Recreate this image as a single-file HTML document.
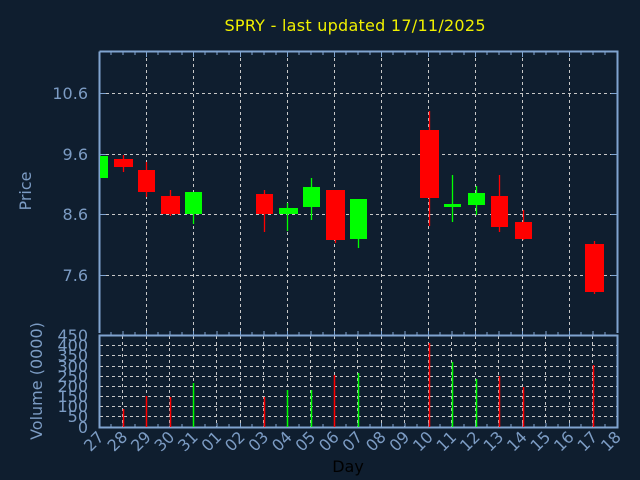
<!DOCTYPE html>
<html><head><meta charset="utf-8"><style>
html,body{margin:0;padding:0;background:#0f1e2f;}
svg{display:block;}
text{font-family:"DejaVu Sans","Liberation Sans",sans-serif;}
</style></head><body>
<svg width="640" height="480" viewBox="0 0 640 480" xmlns="http://www.w3.org/2000/svg">
<rect width="640" height="480" fill="#0f1e2f"/>
<text x="355" y="31" fill="#f0f000" font-size="16" text-anchor="middle" textLength="261">SPRY - last updated 17/11/2025</text>
<g stroke="#c8c8c8" stroke-width="1" stroke-dasharray="3,3" fill="none">
<path d="M146.5 52V333M193.5 52V333M240.5 52V333M287.5 52V333M334.5 52V333M381.5 52V333M428.5 52V333M475.5 52V333M522.5 52V333M569.5 52V333"/>
<path d="M100 93.5H617M100 154.5H617M100 214.5H617M100 275.5H617"/>
<path d="M122.5 336V427M146.5 336V427M169.5 336V427M193.5 336V427M216.5 336V427M240.5 336V427M263.5 336V427M287.5 336V427M310.5 336V427M334.5 336V427M357.5 336V427M381.5 336V427M404.5 336V427M428.5 336V427M451.5 336V427M475.5 336V427M498.5 336V427M522.5 336V427M545.5 336V427M569.5 336V427M592.5 336V427"/>
<path d="M100 345.5H617M100 355.5H617M100 366.5H617M100 376.5H617M100 386.5H617M100 396.5H617M100 406.5H617M100 416.5H617"/>
</g>
<g stroke="#80a4d0" stroke-width="2" fill="none">
<path d="M99.5 51.5H617.5V333M99.5 51.5V333"/>
<path d="M99.5 335.5H617.5V427.5H99.5Z"/>
</g>
<g stroke="#80a4d0" stroke-width="1" fill="none">
<path d="M111 52v3M123 52v3M135 52v3M146.5 52v5M158 52v3M170 52v3M182 52v3M193.5 52v5M205 52v3M217 52v3M229 52v3M240.5 52v5M252 52v3M264 52v3M276 52v3M287.5 52v5M299 52v3M311 52v3M323 52v3M334.5 52v5M346 52v3M358 52v3M370 52v3M381.5 52v5M393 52v3M405 52v3M417 52v3M428.5 52v5M440 52v3M452 52v3M464 52v3M475.5 52v5M487 52v3M499 52v3M511 52v3M522.5 52v5M534 52v3M546 52v3M558 52v3M569.5 52v5M581 52v3M593 52v3M605 52v3"/>
<path d="M111 335v-3M123 335v-4M135 335v-3M146.5 335v-4M158 335v-3M170 335v-4M182 335v-3M193.5 335v-4M205 335v-3M217 335v-4M229 335v-3M240.5 335v-4M252 335v-3M264 335v-4M276 335v-3M287.5 335v-4M299 335v-3M311 335v-4M323 335v-3M334.5 335v-4M346 335v-3M358 335v-4M370 335v-3M381.5 335v-4M393 335v-3M405 335v-4M417 335v-3M428.5 335v-4M440 335v-3M452 335v-4M464 335v-3M475.5 335v-4M487 335v-3M499 335v-4M511 335v-3M522.5 335v-4M534 335v-3M546 335v-4M558 335v-3M569.5 335v-4M581 335v-3M593 335v-4M605 335v-3"/>
<path d="M111 427v-3M123 427v-4M135 427v-3M146.5 427v-4M158 427v-3M170 427v-4M182 427v-3M193.5 427v-4M205 427v-3M217 427v-4M229 427v-3M240.5 427v-4M252 427v-3M264 427v-4M276 427v-3M287.5 427v-4M299 427v-3M311 427v-4M323 427v-3M334.5 427v-4M346 427v-3M358 427v-4M370 427v-3M381.5 427v-4M393 427v-3M405 427v-4M417 427v-3M428.5 427v-4M440 427v-3M452 427v-4M464 427v-3M475.5 427v-4M487 427v-3M499 427v-4M511 427v-3M522.5 427v-4M534 427v-3M546 427v-4M558 427v-3M569.5 427v-4M581 427v-3M593 427v-4M605 427v-3"/>
<path d="M100 93.5h6M100 154.5h6M100 214.5h6M100 275.5h6M617 93.5h-6M617 154.5h-6M617 214.5h-6M617 275.5h-6"/>
</g>
<!-- candles -->
<g stroke="#ff0000" stroke-width="1.3">
<path d="M123.5 155V172M146.5 162V197M170.5 190V216M264.5 190V232M335.5 190V243M429.5 111V226M499.5 175V232M523.5 210V240M594.5 241V294"/>
</g>
<g stroke="#00ff00" stroke-width="1.3">
<path d="M193.5 192V224M287.5 203V231M311.5 178V220M358.5 199V248M452.5 175V222M476.5 186V215"/>
</g>
<g fill="#ff0000">
<rect x="114" y="159" width="19" height="8"/>
<rect x="138" y="170" width="17" height="22"/>
<rect x="161" y="196" width="19" height="18"/>
<rect x="256" y="194" width="17" height="20"/>
<rect x="326" y="190" width="19" height="50"/>
<rect x="420" y="130" width="19" height="68"/>
<rect x="491" y="196" width="17" height="31"/>
<rect x="515" y="222" width="17" height="17"/>
<rect x="585" y="244" width="19" height="48"/>
</g>
<g fill="#00ff00">
<rect x="100" y="156" width="8" height="22"/>
<rect x="185" y="192" width="17" height="22"/>
<rect x="279" y="208" width="19" height="6"/>
<rect x="303" y="187" width="17" height="20"/>
<rect x="350" y="199" width="17" height="40"/>
<rect x="444" y="204" width="17" height="3"/>
<rect x="468" y="193" width="17" height="12"/>
</g>
<!-- volume bars -->
<g stroke="#ff0000" stroke-width="1.5">
<path d="M123.5 409V427M146.5 396V427M170.5 397V427M264.5 397V427M334.5 375V427M429.5 343V427M499.5 376V427M523.5 387V427M593.5 365V427"/>
</g>
<g stroke="#00ff00" stroke-width="1.5">
<path d="M193.5 383V427M287.5 390V427M311.5 390V427M358.5 373V427M452.5 362V427M476.5 379V427"/>
</g>
<g fill="#7c9cc4" font-size="16" text-anchor="end">
<text x="88" y="99">10.6</text>
<text x="88" y="160">9.6</text>
<text x="88" y="220">8.6</text>
<text x="88" y="281">7.6</text>
<text x="88" y="341">450</text>
<text x="88" y="351">400</text>
<text x="88" y="361">350</text>
<text x="88" y="372">300</text>
<text x="88" y="382">250</text>
<text x="88" y="392">200</text>
<text x="88" y="402">150</text>
<text x="88" y="412">100</text>
<text x="88" y="422">50</text>
<text x="88" y="433">0</text>
</g>
<text transform="translate(31,191) rotate(-90)" fill="#7c9cc4" font-size="16" text-anchor="middle">Price</text>
<text transform="translate(42,381) rotate(-90)" fill="#7c9cc4" font-size="16" text-anchor="middle">Volume (0000)</text>
<g fill="#7c9cc4" font-size="16" text-anchor="end">
<text transform="translate(105,438) rotate(-45)">27</text>
<text transform="translate(128.5,438) rotate(-45)">28</text>
<text transform="translate(152,438) rotate(-45)">29</text>
<text transform="translate(175.5,438) rotate(-45)">30</text>
<text transform="translate(199,438) rotate(-45)">31</text>
<text transform="translate(222.5,438) rotate(-45)">01</text>
<text transform="translate(246,438) rotate(-45)">02</text>
<text transform="translate(269.5,438) rotate(-45)">03</text>
<text transform="translate(293,438) rotate(-45)">04</text>
<text transform="translate(316.5,438) rotate(-45)">05</text>
<text transform="translate(340,438) rotate(-45)">06</text>
<text transform="translate(363.5,438) rotate(-45)">07</text>
<text transform="translate(387,438) rotate(-45)">08</text>
<text transform="translate(410.5,438) rotate(-45)">09</text>
<text transform="translate(434,438) rotate(-45)">10</text>
<text transform="translate(457.5,438) rotate(-45)">11</text>
<text transform="translate(481,438) rotate(-45)">12</text>
<text transform="translate(504.5,438) rotate(-45)">13</text>
<text transform="translate(528,438) rotate(-45)">14</text>
<text transform="translate(551.5,438) rotate(-45)">15</text>
<text transform="translate(575,438) rotate(-45)">16</text>
<text transform="translate(598.5,438) rotate(-45)">17</text>
<text transform="translate(622,438) rotate(-45)">18</text>
</g>
<text x="348" y="472" fill="#000000" font-size="16" text-anchor="middle">Day</text>
</svg>
</body></html>
